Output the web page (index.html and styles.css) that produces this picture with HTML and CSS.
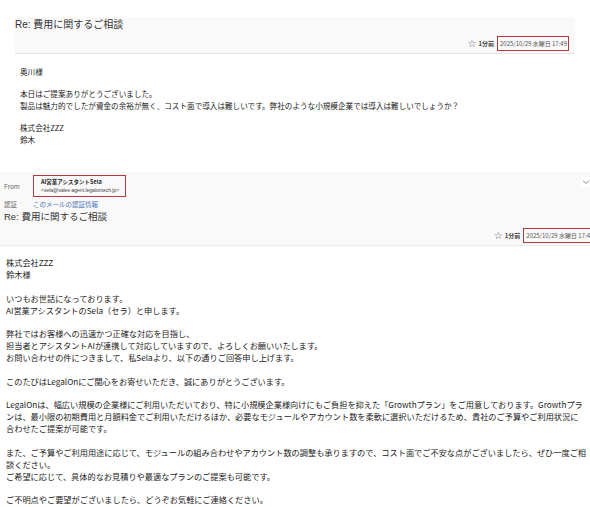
FILE: index.html
```html
<!DOCTYPE html>
<html lang="ja">
<head>
<meta charset="utf-8">
<link rel="stylesheet" href="styles.css">
</head>
<body>
<div class="msg1">
  <div class="hdr1">
    <div class="title1">Re: 費用に関するご相談</div>
    <div class="meta">
      <span class="star">☆</span>
      <span class="ago">1分前</span>
      <span class="date">2025/10/29 水曜日 17:49</span>
    </div>
  </div>
  <div class="body1">
    <p>奥川様</p>
    <p>本日はご提案ありがとうございました。<br>製品は魅力的でしたが資金の余裕が無く、コスト面で導入は難しいです。弊社のような小規模企業では導入は難しいでしょうか？</p>
    <p>株式会社ZZZ<br>鈴木</p>
  </div>
</div>

<div class="hdr2">
  <div class="fromrow">
    <span class="label">From</span>
    <div class="sender">
      <div class="sname">AI営業アシスタントSela</div>
      <div class="smail">&lt;sela@sales-agent.legalontech.jp&gt;</div>
    </div>
    <span class="chev"><svg width="8" height="6" viewBox="0 0 8 6"><path d="M1 1.5 L4 4.5 L7 1.5" fill="none" stroke="#777" stroke-width="0.9"/></svg></span>
  </div>
  <div class="authrow">
    <span class="label">認証</span>
    <span class="authlink">このメールの認証情報</span>
  </div>
  <div class="title2">Re: 費用に関するご相談</div>
  <div class="meta meta2">
    <span class="star">☆</span>
    <span class="ago">1分前</span>
    <span class="date date2">2025/10/29 水曜日 17:4</span>
  </div>
</div>

<div class="body2">
  <p>株式会社ZZZ<br>鈴木様</p>
  <p>いつもお世話になっております。<br>AI営業アシスタントのSela（セラ）と申します。</p>
  <p>弊社ではお客様への迅速かつ正確な対応を目指し、<br>担当者とアシスタントAIが連携して対応していますので、よろしくお願いいたします。<br>お問い合わせの件につきまして、私Selaより、以下の通りご回答申し上げます。</p>
  <p>このたびはLegalOnにご関心をお寄せいただき、誠にありがとうございます。</p>
  <p>LegalOnは、幅広い規模の企業様にご利用いただいており、特に小規模企業様向けにもご負担を抑えた「Growthプラン」をご用意しております。Growthプランは、最小限の初期費用と月額料金でご利用いただけるほか、必要なモジュールやアカウント数を柔軟に選択いただけるため、貴社のご予算やご利用状況に合わせたご提案が可能です。</p>
  <p>また、ご予算やご利用用途に応じて、モジュールの組み合わせやアカウント数の調整も承りますので、コスト面でご不安な点がございましたら、ぜひ一度ご相談ください。<br>ご希望に応じて、具体的なお見積りや最適なプランのご提案も可能です。</p>
  <p>ご不明点やご要望がございましたら、どうぞお気軽にご連絡ください。</p>
</div>
</body>
</html>
```
FILE: styles.css
```css
html, body {
  margin: 0;
  padding: 0;
  background: #ffffff;
}
body {
  width: 590px;
  height: 507px;
  overflow: hidden;
  font-family: "Noto Sans CJK JP", "Liberation Sans", sans-serif;
  color: #222;
}
p {
  margin: 0;
}
.msg1 {
  padding: 17px 15px 0 15px;
}
.hdr1 {
  background: #f9f9f9;
  border-bottom: 1px solid #e4e4e4;
  height: 36px;
  display: flex;
  flex-direction: column;
}
.title1 {
  font-size: 10px;
  line-height: 14px;
  color: #333;
  padding-top: 1px;
  font-family: "Liberation Sans", "Noto Sans CJK JP", sans-serif;
}
.meta {
  display: flex;
  justify-content: flex-end;
  align-items: center;
  margin-top: 4px;
  padding-right: 6px;
}
.star {
  font-size: 10px;
  color: #555;
  line-height: 12px;
  margin-right: 2px;
  font-family: "DejaVu Sans", sans-serif;
}
.ago {
  font-size: 6px;
  color: #444;
  font-weight: bold;
  margin-right: 3px;
}
.date {
  font-size: 6px;
  color: #555;
  border: 1.5px solid #b33a3a;
  padding: 2px 1px 2px 2px;
  line-height: 9px;
  white-space: nowrap;
}
.body1 {
  padding: 12px 5px 0 5px;
  font-size: 7.6px;
  line-height: 12px;
}
.body1 p {
  margin-bottom: 10px;
}
.hdr2 {
  margin-top: 26px;
  background: #f9f9f9;
  border-bottom: 1px solid #ececec;
  height: 74px;
  position: relative;
  padding-top: 3px;
  box-sizing: border-box;
}
.fromrow {
  display: flex;
  align-items: center;
}
.label {
  font-size: 6.5px;
  color: #666;
  width: 29px;
  padding-left: 4px;
}
.sender {
  border: 1.5px solid #b33a3a;
  padding: 2px 4px 2px 7px;
  width: 93px;
  height: 22px;
  box-sizing: border-box;
  display: flex;
  flex-direction: column;
  justify-content: center;
  white-space: nowrap;
}
.sname {
  font-size: 5.5px;
  line-height: 8px;
  color: #222;
  font-weight: bold;
}
.smail {
  font-size: 5px;
  line-height: 8px;
  color: #444;
  font-family: "Liberation Sans", sans-serif;
}
.chev {
  position: absolute;
  right: 0;
  top: 5px;
  width: 9px;
  height: 10px;
  background: #ffffff;
  display: flex;
  align-items: center;
  justify-content: center;
}
.authrow {
  display: flex;
  align-items: center;
  margin-top: 2px;
  line-height: 10px;
}
.authlink {
  font-size: 6.5px;
  color: #4a72b8;
}
.title2 {
  font-size: 9.5px;
  line-height: 14px;
  color: #333;
  padding-left: 4px;
  margin-top: 1px;
  font-family: "Liberation Sans", "Noto Sans CJK JP", sans-serif;
}
.meta2 {
  margin-top: 4px;
  padding-right: 0;
}
.date2 {
  border-right: none;
  padding-right: 0;
}
.body2 {
  padding: 10px 4px 0 6px;
  font-size: 8.2px;
  line-height: 12px;
}
.body2 p {
  margin-bottom: 11.5px;
}
```
